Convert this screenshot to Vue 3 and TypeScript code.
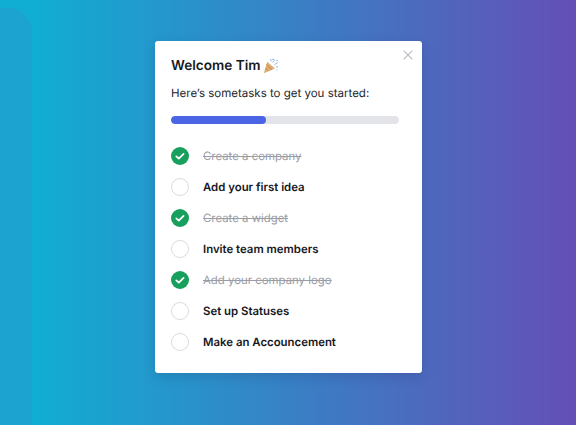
<script setup lang="ts">
interface Task { label: string; done: boolean }
const tasks: Task[] = [
  { label: 'Create a company', done: true },
  { label: 'Add your first idea', done: false },
  { label: 'Create a widget', done: true },
  { label: 'Invite team members', done: false },
  { label: 'Add your company logo', done: true },
  { label: 'Set up Statuses', done: false },
  { label: 'Make an Accouncement', done: false },
]
</script>

<template>
  <div class="page">
    <div class="rail"></div>
    <section class="card">
      <button class="close" aria-label="Close">
        <svg width="10" height="10" viewBox="0 0 10 10"><path d="M.6.6l8.8 8.8M9.4.6L.6 9.4" stroke="#b4b9c2" stroke-width="1.1" fill="none"/></svg>
      </button>
      <h1 class="title">Welcome Tim
        <svg class="party" width="16" height="16" viewBox="0 0 16 16">
          <path d="M4.2 3.8 12 10.6 .8 15.2z" fill="#e0ad72"/>
          <path d="M3.4 6.6 9 11.8M2.4 10l3 3" stroke="#c08a4e" stroke-width="1" fill="none"/>
          <path d="M7.5 1l.8 2.4M12 1.5 9.6 4.6M14.8 4.6 11.4 6.6M15 8.8l-2.2.2" stroke="#8fb1dc" stroke-width=".9" fill="none"/>
          <circle cx="10" cy="1.2" r=".7" fill="#6aa0d8"/><circle cx="14" cy="2.4" r=".7" fill="#7fa6dc"/><circle cx="13.8" cy="11.8" r=".6" fill="#9bb8de"/>
        </svg>
      </h1>
      <p class="intro">Here’s sometasks to get you started:</p>
      <div class="track"><div class="fill"></div></div>
      <ul class="list">
        <li v-for="t in tasks" :key="t.label" class="row">
          <svg v-if="t.done" class="icon" width="18" height="18" viewBox="0 0 18 18">
            <circle cx="9" cy="9" r="9" fill="#17a05d"/>
            <path d="M5.3 9.3l2.5 2.4 4.8-4.9" stroke="#fff" stroke-width="1.7" fill="none" stroke-linecap="round" stroke-linejoin="round"/>
          </svg>
          <svg v-else class="icon" width="18" height="18" viewBox="0 0 18 18">
            <circle cx="9" cy="9" r="8.5" fill="#fff" stroke="#d9dbe1" stroke-width="1"/>
          </svg>
          <span :class="t.done ? 'done' : 'todo'">{{ t.label }}</span>
        </li>
      </ul>
    </section>
  </div>
</template>

<style>
html, body { margin: 0; padding: 0; }
</style>

<style scoped>
.page {
  position: relative;
  width: 576px;
  height: 425px;
  overflow: hidden;
  display: flex;
  justify-content: center;
  padding: 41px 0 0 1px;
  box-sizing: border-box;
  background: linear-gradient(90deg, #10aed3 5%, #644fb6 100%);
  font-family: Inter, "Liberation Sans", sans-serif;
  text-rendering: geometricPrecision;
}
.rail {
  position: absolute;
  left: 0;
  top: 8px;
  width: 32px;
  height: 417px;
  background: #1ca3d0;
  border-top-right-radius: 24px;
}
.card {
  position: relative;
  width: 267px;
  height: 332px;
  box-sizing: border-box;
  padding: 16px 23px 0 16px;
  background: #fff;
  border-radius: 3px;
  box-shadow: 0 4px 12px rgba(30, 40, 90, 0.18);
}
.close {
  position: absolute;
  top: 9px;
  right: 9px;
  padding: 0;
  border: 0;
  background: none;
  display: flex;
}
.title {
  margin: 0;
  display: flex;
  align-items: center;
  gap: 3px;
  height: 18px;
  font-size: 13.6px;
  font-weight: 600;
  color: #16181d;
}
.intro {
  margin: 10px 0 0;
  font-size: 11.5px;
  line-height: 17px;
  color: #22252b;
}
.track {
  margin-top: 14px;
  height: 8px;
  border-radius: 4px;
  background: #e3e4ea;
  overflow: hidden;
}
.fill {
  width: 94.5px;
  height: 100%;
  border-radius: 4px;
  background: #4a64e4;
}
.list {
  list-style: none;
  margin: 23px 0 0;
  padding: 0;
  display: flex;
  flex-direction: column;
  gap: 13px;
}
.row {
  display: flex;
  align-items: center;
  gap: 14px;
  height: 18px;
  font-size: 11.4px;
}
.icon { flex: none; }
.todo { font-weight: 600; color: #16181d; }
.done { color: #9a9da5; text-decoration: line-through; }
</style>
